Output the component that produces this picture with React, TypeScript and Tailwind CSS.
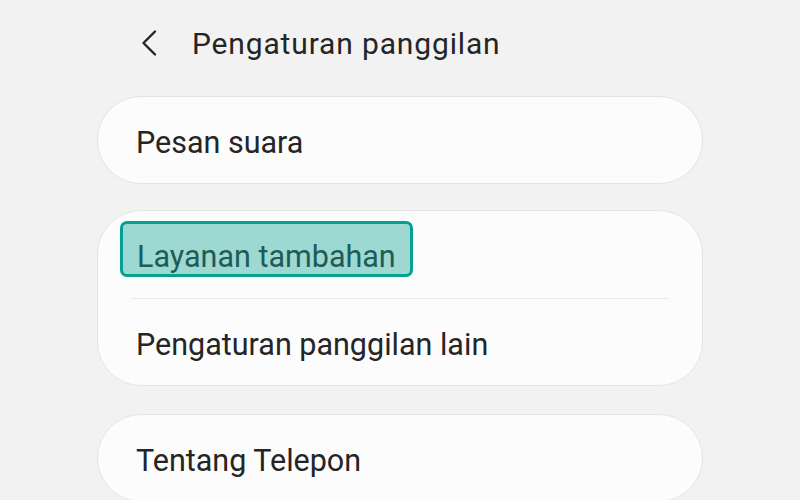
const Row = ({ label }: { label: string }) => (
    <div className="h-[86px] flex items-center pt-[5px] px-[38px] text-[30.5px] text-[#252525]">
        {label}
    </div>
);

const App = () => {
    return (
        <div
            className="w-[800px] h-[500px] overflow-hidden bg-[#f2f2f2]"
            style={{ fontFamily: 'Roboto, "Noto Sans", sans-serif' }}
        >
            <div className="ml-[97px] w-[606px]">
                <div className="h-[96px] flex items-center pb-[10px]">
                    <svg
                        width="18"
                        height="28"
                        viewBox="0 0 18 28"
                        className="ml-[43px]"
                        fill="none"
                        stroke="#252525"
                        strokeWidth="2.4"
                        strokeLinecap="round"
                        strokeLinejoin="round"
                    >
                        <path d="M15 2.5 L3.5 14 L15 25.5" />
                    </svg>
                    <span className="ml-[34px] text-[30px] text-[#252525] tracking-[0.85px]">
                        Pengaturan panggilan
                    </span>
                </div>

                <div className="rounded-[44px] bg-[#fcfcfc] border border-[#e4e4e4]">
                    <Row label="Pesan suara" />
                </div>

                <div className="mt-[26px] rounded-[44px] bg-[#fcfcfc] border border-[#e4e4e4]">
                    <div className="h-[87px] flex items-start pt-[10px] px-[22px]">
                        <span className="h-[56px] flex items-center pt-[16px] px-[14px] border-[3px] border-[#04a192] bg-[#9dd8d2] rounded-[7px] text-[30.5px] text-[#1e5c56]">
                            Layanan tambahan
                        </span>
                    </div>
                    <div className="mx-[33px] h-px bg-[#e9e9e9]"></div>
                    <Row label="Pengaturan panggilan lain" />
                </div>

                <div className="mt-[28px] rounded-[44px] bg-[#fcfcfc] border border-[#e4e4e4]">
                    <Row label="Tentang Telepon" />
                </div>
            </div>
        </div>
    );
};

export default App;
